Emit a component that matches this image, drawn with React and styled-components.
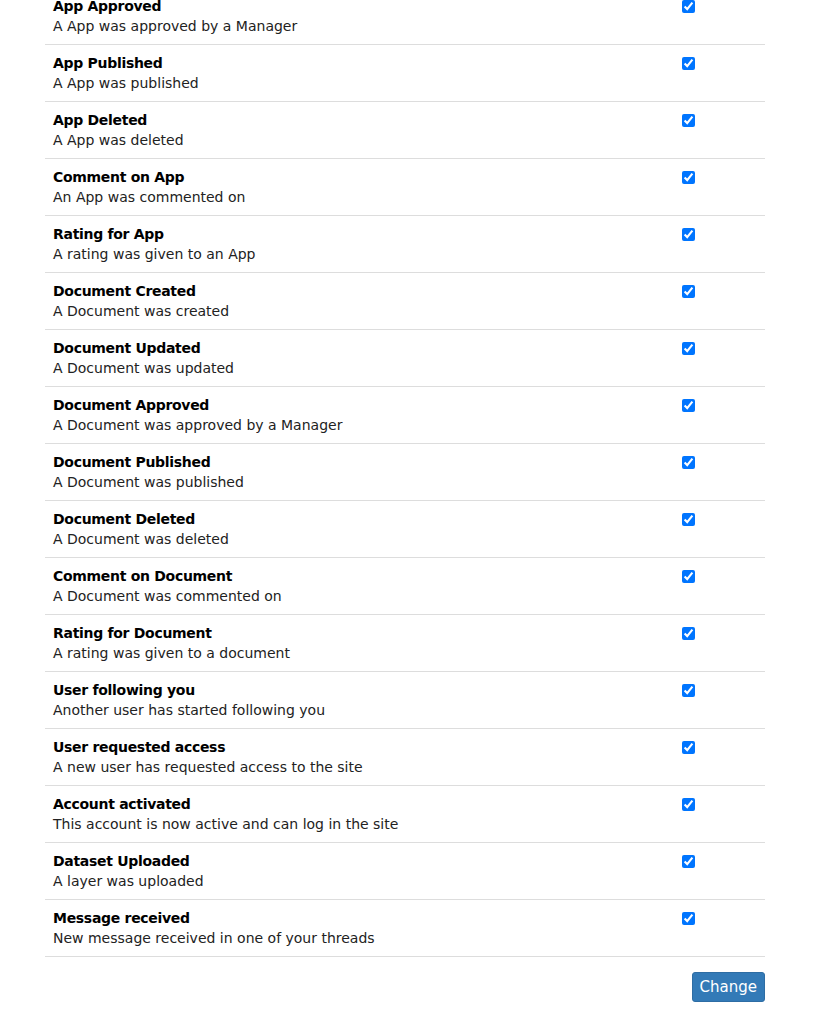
import React from 'react';
import styled, { createGlobalStyle } from 'styled-components';

const GlobalStyle = createGlobalStyle`
    body {
        margin: 0;
        background: #fff;
        font-family: "DejaVu Sans", "Noto Sans", sans-serif;
        color: #333;
    }
`;

const Page = styled.div`
    width: 720px;
    margin: -13px 0 0 45px;
`;

const Row = styled.div`
    display: grid;
    grid-template-columns: 1fr 91px;
    border-top: 1px solid #ddd;
    &:last-child {
        border-bottom: 1px solid #ddd;
    }
`;

const Cell = styled.div`
    padding: 8px;
    font-size: 14px;
    line-height: 20px;
`;

const Title = styled.div`
    font-weight: bold;
    color: #000;
    letter-spacing: -0.3px;
`;

const Desc = styled.div`
    color: #222;
`;

const Check = styled.input`
    margin: 4px 0 0;
    width: 13px;
    height: 13px;
    accent-color: #0075ff;
`;

const Footer = styled.div`
    display: flex;
    justify-content: flex-end;
    padding-top: 15px;
`;

const Button = styled.button`
    height: 30px;
    padding: 0 7px;
    background: #337ab7;
    border: 1px solid #2e6da4;
    border-radius: 3px;
    color: #fff;
    font-family: inherit;
    font-size: 15px;
    cursor: pointer;
`;

const events = [
    ['App Approved', 'A App was approved by a Manager'],
    ['App Published', 'A App was published'],
    ['App Deleted', 'A App was deleted'],
    ['Comment on App', 'An App was commented on'],
    ['Rating for App', 'A rating was given to an App'],
    ['Document Created', 'A Document was created'],
    ['Document Updated', 'A Document was updated'],
    ['Document Approved', 'A Document was approved by a Manager'],
    ['Document Published', 'A Document was published'],
    ['Document Deleted', 'A Document was deleted'],
    ['Comment on Document', 'A Document was commented on'],
    ['Rating for Document', 'A rating was given to a document'],
    ['User following you', 'Another user has started following you'],
    ['User requested access', 'A new user has requested access to the site'],
    ['Account activated', 'This account is now active and can log in the site'],
    ['Dataset Uploaded', 'A layer was uploaded'],
    ['Message received', 'New message received in one of your threads']
];

const App = () => {
    return (
        <>
            <GlobalStyle />
            <Page>
                <div>
                    {events.map(([title, desc]) => (
                        <Row key={title}>
                            <Cell>
                                <Title>{title}</Title>
                                <Desc>{desc}</Desc>
                            </Cell>
                            <Cell>
                                <Check type="checkbox" defaultChecked />
                            </Cell>
                        </Row>
                    ))}
                </div>
                <Footer>
                    <Button type="button">Change</Button>
                </Footer>
            </Page>
        </>
    );
};

export default App;
